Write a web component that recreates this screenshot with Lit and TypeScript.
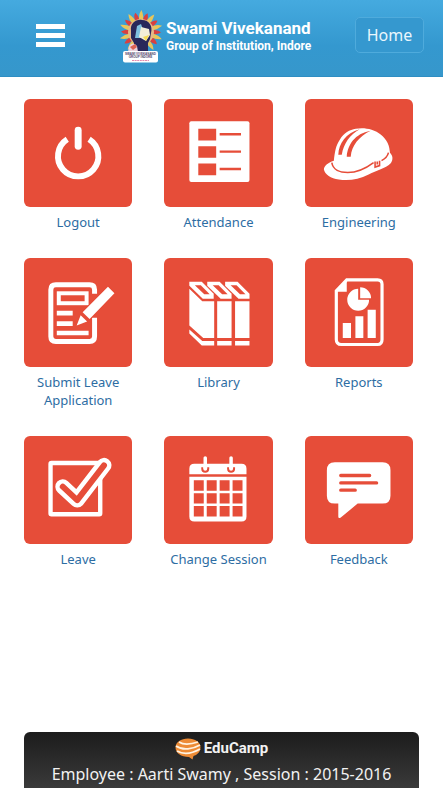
import { LitElement, html, svg, css } from "lit";
import type { TemplateResult } from "lit";
import { customElement, property } from "lit/decorators.js";

const icons: Record<string, TemplateResult> = {
  logout: svg`
    <path class="line" stroke-width="6" d="M43.5 40.5A20.3 20.3 0 1 0 65.5 40.5"/>
    <path class="line round" stroke-width="7" d="M54.5 31.5V47.5"/>`,
  attendance: svg`
    <rect class="fill" x="25.5" y="22.5" width="60.5" height="61" rx="2"/>
    <path class="cut" d="M34.5 30h18v11.7h-18zM34.5 47.5h18v11.7h-18zM34.5 65h18v11.7h-18z"/>
    <path class="cutline" stroke-width="2.4" d="M56 35.5H77.5M56 53H77.5M56 70.5H77.5"/>`,
  helmet: svg`
    <path class="fill" d="M29 62C30 53 31 47 35 41C39 34 45 31 51 30C57 29 62 29.500 67 31C74 33 80 38 83 44C85 48 85 51 85.500 54C88.500 57 89 61 86 65C81 70 72 72 64 76C54 81 44 82.500 34 81C26 80 20 76 19 71C19 67 23 64 29 62Z"/>
    <path class="cutline" stroke-width="1.600" d="M27 64C28 71 35 74 43 74C53 74 61 70 69 64M77 62C81 60 83 58 84 54"/>
    <path class="cut" d="M33.500 56C34 45 41 34 55 30.500C45 36 39 45 37 56ZM42 58C43 46 50 35 66 32C54 38 47 47 46 58Z"/>
    <path class="cutline" stroke-width="1.600" d="M70.500 63V68.500L75 67V62M72.700 63V66"/>`,
  submit: svg`
    <path class="line" stroke-width="5" d="M71 36V32Q71 27 66 27H32Q27 27 27 32V79Q27 84 32 84H66Q71 84 71 79V60"/>
    <rect class="line" stroke-width="4" x="35" y="35.500" width="28" height="10"/>
    <path class="line" stroke-width="4.600" d="M33 55.500H49M33 66H49M33 75.500H65"/>
    <path class="fill edge" d="M59 54.500L84.500 29L91 35.500L66 61.500ZM57 57.500L63.500 64L53 68Z"/>`,
  library: svg`${[0, 18, 36].map(
    (dx) => svg`<g transform="translate(${dx} 0)">
      <path class="fill" d="M25.500 24H38L50 36V41H39L25.500 28Z"/>
      <path class="cut" d="M31 27.500H37L46 36.500H40.500Z"/>
      ${
        dx
          ? svg`<path class="fill" d="M35.500 43.500H50V80.500H35.500ZM35.500 83.500H50V88H35.500Z"/>`
          : svg`<path class="fill" d="M25.500 31L38.500 43.500H50.500V80.500H39.500L25.500 68ZM25.500 72L38.500 83.500H50.500V88H38L25.500 76Z"/>`
      }
    </g>`
  )}`,
  reports: svg`
    <path class="line" stroke-width="3.200" d="M42 22H73Q77.500 22 77.500 26.500V82Q77.500 87 73 87H36.500Q31.500 87 31.500 82V33Z"/>
    <path class="fill" d="M31 34L42 22V34Z"/>
    <path class="fill" d="M53.500 31A11 11 0 1 0 64.500 42H53.500ZM55.500 29.500A11 11 0 0 1 66.500 40.500H55.500Z"/>
    <path class="fill" d="M38 65.500h8.300v15H38zM50.700 58.500h8v22h-8zM63 52h8.200v28.500H63z"/>`,
  leave: svg`
    <rect class="line" stroke-width="4.400" x="26.700" y="27.200" width="50" height="51.500" rx="1"/>
    <path class="line round" stroke-width="15" d="M39 51L53.500 64.500L80.500 29.500"/>
    <path class="cutline round" stroke-width="6" d="M39 51L53.500 64.500L80.500 29.500"/>`,
  calendar: svg`
    <path class="fill" d="M25.500 38.500V33Q25.500 28 30.500 28H78Q83 28 83 33V38.500ZM25.500 41H83V81Q83 86 78 86H30.500Q25.500 86 25.500 81Z"/>
    <path class="cut" d="${[44.5, 57.5, 70.5]
      .map((y) => [30, 43, 56, 69].map((x) => `M${x} ${y}h10v10.500h-10z`).join(""))
      .join("")}"/>
    <path class="cutline" stroke-width="2" d="M38.500 31.500V33A3 3 0 0 0 44.500 33V31.500M64.500 31.500V33A3 3 0 0 0 70.500 33V31.500"/>
    <path class="line round" stroke-width="3.500" d="M41.500 22V32M67.500 22V32"/>`,
  feedback: svg`
    <path class="fill" d="M30 26.500H78Q86 26.500 86 34.500V60Q86 68 78 68H53L36 82Q33.500 83.500 33.500 81V68H30Q22 68 22 60V34.500Q22 26.500 30 26.500Z"/>
    <path class="cutline round" stroke-width="3.400" d="M36 39.800H65M36 47.200H72M36 54.500H50.500"/>`,
};

@customElement("menu-tile")
class MenuTile extends LitElement {
  @property() icon = "";
  @property() label = "";

  static styles = css`
    :host { display: block; }
    .tile {
      display: flex;
      flex-direction: column;
      align-items: center;
      gap: 6px;
      color: #2d6da3;
      font: 13px/18px "Noto Sans", "Open Sans", sans-serif;
      text-align: center;
      text-decoration: none;
    }
    .art {
      display: block;
      width: 100%;
      aspect-ratio: 1;
      border-radius: 6px;
      background: #e64d39;
    }
    .fill { fill: #fff; }
    .edge { stroke: #e64d39; stroke-width: 2; paint-order: stroke; }
    .cut { fill: #e64d39; }
    .line { fill: none; stroke: #fff; }
    .cutline { fill: none; stroke: #e64d39; }
    .round { stroke-linecap: round; stroke-linejoin: round; }
  `;

  render() {
    return html`<a class="tile" href="#">
      <svg class="art" viewBox="0 0 109 109" aria-hidden="true">${icons[this.icon]}</svg>
      <span>${this.label}</span>
    </a>`;
  }
}

const items = [
  ["logout", "Logout"],
  ["attendance", "Attendance"],
  ["helmet", "Engineering"],
  ["submit", "Submit Leave Application"],
  ["library", "Library"],
  ["reports", "Reports"],
  ["leave", "Leave"],
  ["calendar", "Change Session"],
  ["feedback", "Feedback"],
];

const rays = Array.from({ length: 20 }, (_, i) => i);

@customElement("app-root")
class AppRoot extends LitElement {
  static styles = css`
    :host {
      display: flex;
      flex-direction: column;
      min-height: 100vh;
      background: #fff;
      font-family: "Noto Sans", "Open Sans", sans-serif;
    }
    .bar {
      display: flex;
      align-items: center;
      box-sizing: border-box;
      height: 77px;
      padding: 0 19px 6px 36px;
      background: linear-gradient(#45aadf, #3498cf 60%, #3697cb);
      border-bottom: 1px solid #2e8ec3;
    }
    .menu {
      display: flex;
      flex: none;
      flex-direction: column;
      gap: 4px;
      width: 29px;
      padding: 0;
      border: 0;
      background: none;
    }
    .stripe { height: 5px; background: #fff; }
    .brand {
      display: flex;
      align-items: center;
      gap: 2px;
      margin-left: 53px;
      padding-top: 4px;
      color: #fff;
      text-decoration: none;
      font-family: Roboto, "Liberation Sans", sans-serif;
      font-weight: bold;
      white-space: nowrap;
    }
    .crest { width: 46px; height: 54px; flex: none; }
    .crest-text { font: bold 3px "Liberation Sans", sans-serif; fill: #51446a; text-anchor: middle; }
    .name { display: block; font-size: 17px; line-height: 18px; }
    .place { display: block; font-size: 12px; line-height: 18px; }
    .home {
      flex: none;
      margin-left: auto;
      box-sizing: border-box;
      width: 69px;
      height: 36px;
      padding: 0;
      border: 1px solid #4fabdc;
      border-radius: 5px;
      background: #3598cf;
      color: #e9f6fd;
      font: 16px/24px "Noto Sans", "Open Sans", sans-serif;
    }
    .grid {
      display: grid;
      grid-template-columns: repeat(3, 1fr);
      gap: 27px 32px;
      align-content: start;
      flex: 1;
      padding: 22px 30px 27px 24px;
    }
    .foot {
      display: flex;
      flex-direction: column;
      align-items: center;
      gap: 2px;
      margin: 0 24px;
      padding: 5px 0 2px;
      border-radius: 6px 6px 0 0;
      background: linear-gradient(#1c1c1c, #3a3a3a);
      color: #f2f2f2;
      font-size: 16px;
      line-height: 24px;
      white-space: nowrap;
    }
    .product {
      display: flex;
      align-items: center;
      gap: 3px;
      font: bold 15px/23px Roboto, "Liberation Sans", sans-serif;
    }
    .swirl { width: 26px; height: 22px; }
  `;

  render() {
    return html`
      <header class="bar">
        <button class="menu" aria-label="Menu">
          <span class="stripe"></span><span class="stripe"></span><span class="stripe"></span>
        </button>
        <a class="brand" href="#">
          <svg class="crest" viewBox="0 0 46 54" aria-hidden="true">
            ${rays.map(
              (i) => svg`<path fill="${i % 2 ? "#d9403f" : "#e9c65a"}" transform="rotate(${i * 18} 23 22)"
                d="M21.300 11Q20 5 23.500 ${i % 2 ? 2 : 0}Q26 6 25 11Z"/>`
            )}
            <circle cx="23" cy="22" r="13" fill="#e5b989"/>
            <path fill="#29285a" d="M13 21C12 13 18 9 24 10C31 10 35 16 33 23L32 29L30 33V42H16V33L13 28Z"/>
            <path fill="#7fc1e0" d="M19 16L23 14L28 28L17 28Z"/>
            <path fill="#f3efd8" d="M23 17L31 19L32 25L28 31L21 27Z"/>
            <path fill="#f5dc55" d="M25 27L31 25L28 31Z"/>
            <path fill="#ead3dc" d="M11 36Q15 31 19 36L20 42H10Z"/>
            <path fill="#dd6254" d="M12 37L17 34L19 37L15 40Z"/>
            <rect x="5" y="41" width="35" height="11.500" rx="2" fill="#fff"/>
            <text class="crest-text" x="22.500" y="44.800">SWAMI VIVEKANAND</text>
            <text class="crest-text" x="22.500" y="48.300">GROUP INDORE</text>
            <path stroke="#e58bae" stroke-dasharray="2 .6" d="M14 50.500H31"/>
          </svg>
          <span>
            <span class="name">Swami Vivekanand</span>
            <span class="place">Group of Institution, Indore</span>
          </span>
        </a>
        <button class="home">Home</button>
      </header>
      <main class="grid">
        ${items.map(([icon, label]) => html`<menu-tile icon=${icon} label=${label}></menu-tile>`)}
      </main>
      <footer class="foot">
        <div class="product">
          <svg class="swirl" viewBox="0 0 26 22" aria-hidden="true">
            <path fill="#ed8b35" d="M13 .5C20 .5 25.500 4 25.500 9.500C25.500 14 22 17 18.500 18L17.500 21.500L14 19C6 19 .5 15 .5 9.500C.5 4 6 .5 13 .5Z"/>
            <path fill="none" stroke="#fff3e2" stroke-width="1.800" d="M4 4C10 8 17 6 23 4M1 8C8 13 18 11 25 7M2 13C9 17 18 15 25 11"/>
          </svg>
          <span>EduCamp</span>
        </div>
        <div>Employee : Aarti Swamy , Session : 2015-2016</div>
      </footer>
    `;
  }
}
